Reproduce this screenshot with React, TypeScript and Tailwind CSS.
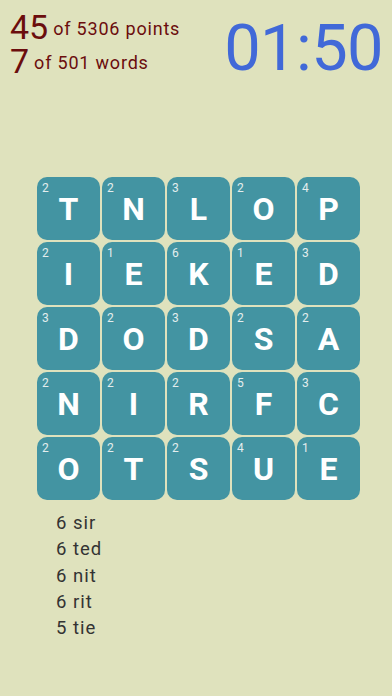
const BOARD: [string, number][][] = [
  [["T", 2], ["N", 2], ["L", 3], ["O", 2], ["P", 4]],
  [["I", 2], ["E", 1], ["K", 6], ["E", 1], ["D", 3]],
  [["D", 3], ["O", 2], ["D", 3], ["S", 2], ["A", 2]],
  [["N", 2], ["I", 2], ["R", 2], ["F", 5], ["C", 3]],
  [["O", 2], ["T", 2], ["S", 2], ["U", 4], ["E", 1]],
];

const WORDS: [number, string][] = [
  [6, "sir"],
  [6, "ted"],
  [6, "nit"],
  [6, "rit"],
  [5, "tie"],
];

function Tile({ letter, value }: { letter: string; value: number }) {
  return (
    <div className="relative w-[63px] h-[63px] rounded-[10px] bg-[#4394a2] flex items-center justify-center">
      <span className="absolute left-[5px] top-[2px] text-[12px] text-[#e3eeee]">{value}</span>
      <span className="text-[32px] font-bold text-white leading-none">{letter}</span>
    </div>
  );
}

export default function App() {
  return (
    <div
      className="w-[392px] h-[696px] bg-[#dfe2bd] overflow-hidden"
      style={{ fontFamily: "Roboto, 'Noto Sans', sans-serif" }}
    >
      <div className="h-[177px] flex justify-between items-start px-[10px] pt-[10px]">
        <div className="text-[#6b0d0d]">
          <div className="flex items-baseline h-[34px]">
            <span className="text-[34px] leading-none">45</span>
            <span className="relative -top-[4px] text-[18px] leading-none tracking-[0.8px] ml-[5px]">of 5306 points</span>
          </div>
          <div className="flex items-baseline h-[34px]">
            <span className="text-[34px] leading-none">7</span>
            <span className="relative -top-[4px] text-[18px] leading-none tracking-[0.8px] ml-[5px]">of 501 words</span>
          </div>
        </div>
        <div className="text-[65px] leading-none tracking-[-0.6px] text-[#4169d8] mt-[6px] mr-[-1px]">01:50</div>
      </div>

      <div className="pl-[37px] flex flex-col gap-[2px]">
        {BOARD.map((row, r) => (
          <div key={r} className="flex gap-[2px]">
            {row.map(([l, v], c) => (
              <Tile key={c} letter={l} value={v} />
            ))}
          </div>
        ))}
      </div>

      <div className="pl-[56px] mt-[10px] text-[18.5px] tracking-[1px] text-[#333333]">
        {WORDS.map(([n, w], i) => (
          <div key={i} className="h-[26.3px] leading-[26px]">
            {n} {w}
          </div>
        ))}
      </div>
    </div>
  );
}
